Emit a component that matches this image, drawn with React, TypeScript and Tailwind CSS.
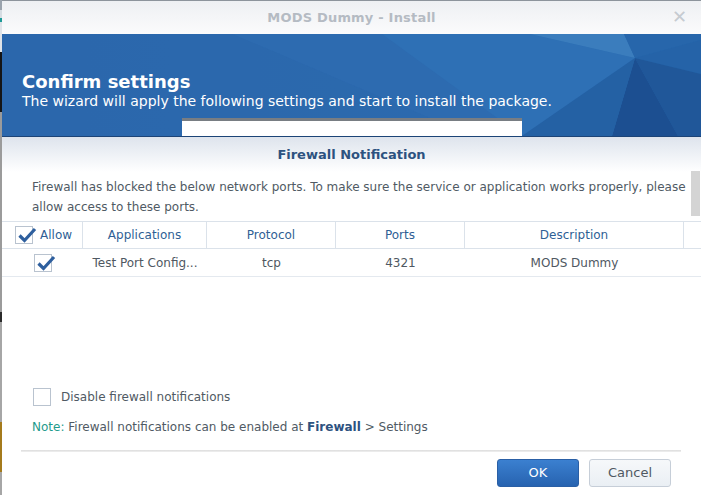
function Box({ checked }: { checked?: boolean }) {
  return (
    <span className="relative inline-block w-[18px] h-[18px] border border-[#b9c3cf] bg-white shrink-0">
      {checked && (
        <svg viewBox="0 0 20 20" className="absolute left-[1px] top-[-2px] w-[20px] h-[20px]">
          <path d="M2.5 10.5 L7.5 15.5 L18 4" fill="none" stroke="#2e5f9e" strokeWidth="3.2" strokeLinejoin="miter" />
        </svg>
      )}
    </span>
  );
}

function Facets() {
  return (
    <svg className="absolute inset-0 w-full h-full" viewBox="0 0 699 102" preserveAspectRatio="none">
      <defs>
        <linearGradient id="bg" x1="0" y1="0" x2="1" y2="0">
          <stop offset="0" stopColor="#2c67ac" />
          <stop offset="0.6" stopColor="#2c6cb1" />
          <stop offset="1" stopColor="#2468ae" />
        </linearGradient>
      </defs>
      <rect width="699" height="102" fill="url(#bg)" />
      <polygon points="230,0 520,0 633,24 520,102 470,102" fill="#2d6bb0" />
      <polygon points="380,0 528,0 633,24 520,102" fill="#2e70b5" />
      <polygon points="528,0 622,0 633,24" fill="#3b7dbd" />
      <polygon points="622,0 699,0 699,6 633,24" fill="#2766ab" />
      <polygon points="633,24 699,6 699,40" fill="#2563a8" />
      <polygon points="633,24 699,40 699,102 676,102" fill="#205799" />
      <polygon points="633,24 676,102 610,102" fill="#1c4f91" />
      <polygon points="633,24 610,102 520,102" fill="#2461a4" />
      <polygon points="0,0 230,0 470,102 0,102" fill="#2b67ab" opacity="0.6" />
    </svg>
  );
}

export default function App() {
  const cols = [
    { w: 'w-[81px]', label: 'Allow' },
    { w: 'w-[124px]', label: 'Applications' },
    { w: 'w-[129px]', label: 'Protocol' },
    { w: 'w-[129px]', label: 'Ports' },
    { w: 'w-[219px]', label: 'Description' },
  ];

  return (
    <div className="w-[701px] h-[495px] overflow-hidden bg-white flex text-[12px] text-[#505a64]" style={{ fontFamily: '"DejaVu Sans", Verdana, sans-serif' }}>
      {/* desktop peeking at left edge */}
      <div className="w-[2px] flex flex-col shrink-0">
        <div className="h-[10px] bg-[#9aa3ad]" />
        <div className="h-[8px] bg-[#d7dde3]" />
        <div className="h-[4px] bg-[#1e9a97]" />
        <div className="h-[30px] bg-[#dfe3e8]" />
        <div className="h-[60px] bg-[#151515]" />
        <div className="h-[200px] bg-[#9b9b9b]" />
        <div className="h-[10px] bg-[#2a2a2a]" />
        <div className="h-[100px] bg-[#a6a6a6]" />
        <div className="h-[50px] bg-[#a57b1c]" />
        <div className="flex-1 bg-[#a6a6a6]" />
      </div>

      <div className="flex-1 flex flex-col min-w-0">
        {/* title bar */}
        <div className="h-[34px] shrink-0 border-t border-[#8d949c] bg-gradient-to-b from-[#eef0f3] to-[#fbfbfc] relative flex items-center justify-center">
          <span className="font-bold text-[13px] text-[#b5bbc3] tracking-[0.2px]">MODS Dummy - Install</span>
          <span className="absolute right-[14px] top-[7px] text-[18px] leading-none text-[#c6cbd1] font-light">✕</span>
        </div>

        {/* banner */}
        <div className="h-[102px] shrink-0 relative">
          <Facets />
          <div className="relative pl-[20px] pt-[37px] text-white">
            <div className="text-[18px] font-bold leading-[22px]">Confirm settings</div>
            <div className="text-[14px] leading-[17px]">The wizard will apply the following settings and start to install the package.</div>
          </div>
          <div className="absolute left-[180px] top-[84px] w-[340px] h-[18px] bg-white border-t-[3px] border-[#787d83]" />
        </div>
        <div className="h-[1px] bg-[#1c4477] shrink-0" />

        {/* modal */}
        <div className="flex-1 flex flex-col relative">
          <div className="h-[35px] shrink-0 bg-gradient-to-b from-[#dee4ed] to-white flex items-center justify-center">
            <span className="font-bold text-[13px] text-[#2d5280]">Firewall Notification</span>
          </div>

          <div className="absolute right-[1px] top-[34px] w-[9px] h-[45px] bg-[#d4d4d4]" />

          <p className="pl-[30px] pr-[8px] pt-[5px] leading-[20px] h-[49px]">
            Firewall has blocked the below network ports. To make sure the service or application works properly, please allow access to these ports.
          </p>

          {/* table */}
          <div className="border-t border-[#dbe2ea] text-[#2f5f95]">
            <div className="flex h-[27px] border-b border-[#dbe2ea]">
              {cols.map((c, i) => (
                <div key={c.label} className={`${c.w} flex items-center border-r border-[#dbe2ea] ${i === 0 ? 'pl-[13px] gap-[7px]' : 'justify-center'}`}>
                  {i === 0 && <Box checked />}
                  <span>{c.label}</span>
                </div>
              ))}
              <div className="flex-1" />
            </div>
            <div className="flex h-[28px] border-b border-[#e4e9ef] text-[#4f5862]">
              <div className="w-[81px] flex items-center justify-center"><Box checked /></div>
              <div className="w-[124px] flex items-center justify-center">Test Port Config...</div>
              <div className="w-[129px] flex items-center justify-center">tcp</div>
              <div className="w-[129px] flex items-center justify-center">4321</div>
              <div className="w-[219px] flex items-center justify-center">MODS Dummy</div>
            </div>
          </div>

          <div className="flex-1" />

          <div className="pl-[31px] flex items-center gap-[10px] h-[18px]">
            <Box />
            <span>Disable firewall notifications</span>
          </div>
          <div className="pl-[30px] mt-[12px] h-[18px] leading-[18px]">
            <span className="text-[#1f9b8c]">Note: </span>
            Firewall notifications can be enabled at <span className="font-bold text-[#2d5280]">Firewall</span> &gt; Settings
          </div>

          <div className="ml-[19px] mr-[20px] mt-[14px] h-[2px] bg-gradient-to-b from-[#dcdcdc] to-[#f0f0f0]" />

          <div className="flex justify-end gap-[10px] pr-[30px] pt-[7px] pb-[8px]">
            <button className="w-[82px] h-[28px] rounded-[3px] border border-[#2a5fa5] bg-gradient-to-b from-[#3b80d0] to-[#2763b0] text-white text-[13px]">OK</button>
            <button className="w-[82px] h-[28px] rounded-[3px] border border-[#c6ced8] bg-gradient-to-b from-[#f6f8fa] to-[#eaeff4] text-[#4f5862] text-[13px]">Cancel</button>
          </div>
        </div>
      </div>
    </div>
  );
}
